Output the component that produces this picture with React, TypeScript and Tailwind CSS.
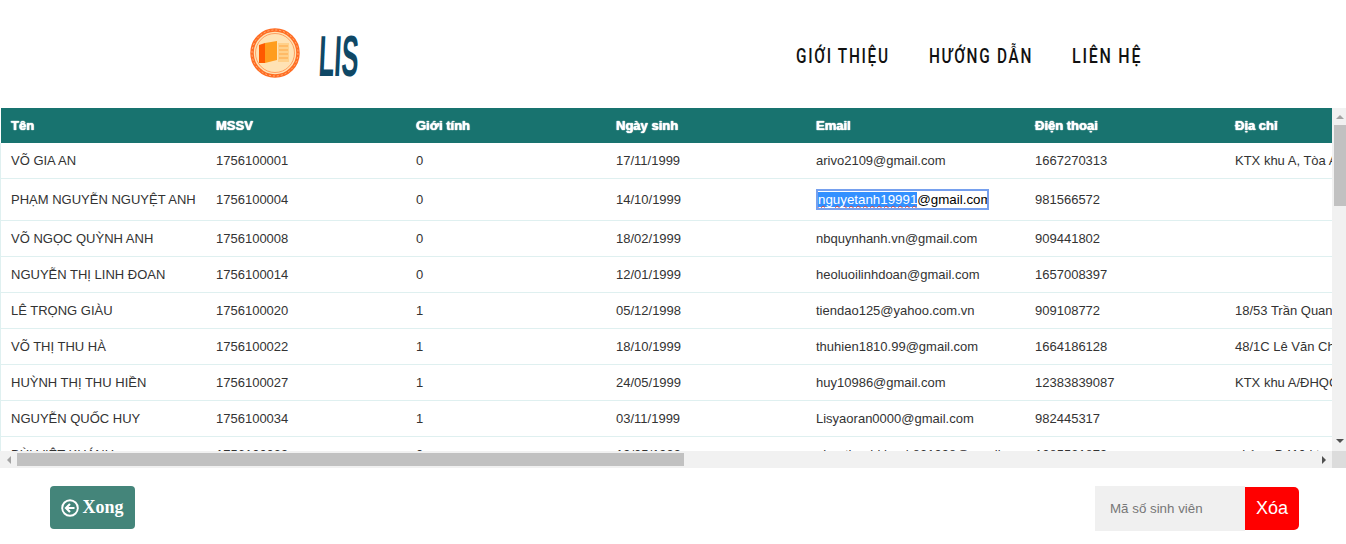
const students = [
  ["VÕ GIA AN", "1756100001", "0", "17/11/1999", "arivo2109@gmail.com", "1667270313", "KTX khu A, Tòa A"],
  ["PHẠM NGUYỄN NGUYỆT ANH", "1756100004", "0", "14/10/1999", "", "981566572", ""],
  ["VÕ NGỌC QUỲNH ANH", "1756100008", "0", "18/02/1999", "nbquynhanh.vn@gmail.com", "909441802", ""],
  ["NGUYỄN THỊ LINH ĐOAN", "1756100014", "0", "12/01/1999", "heoluoilinhdoan@gmail.com", "1657008397", ""],
  ["LÊ TRỌNG GIÀU", "1756100020", "1", "05/12/1998", "tiendao125@yahoo.com.vn", "909108772", "18/53 Trần Quang Khải"],
  ["VÕ THỊ THU HÀ", "1756100022", "1", "18/10/1999", "thuhien1810.99@gmail.com", "1664186128", "48/1C Lê Văn Chí"],
  ["HUỲNH THỊ THU HIỀN", "1756100027", "1", "24/05/1999", "huy10986@gmail.com", "12383839087", "KTX khu A/ĐHQG"],
  ["NGUYỄN QUỐC HUY", "1756100034", "1", "03/11/1999", "Lisyaoran0000@gmail.com", "982445317", ""],
  ["BÙI VIỆT KHÁNH", "1756100039", "0", "19/05/1999", "nhanthanhkhanh831998@gmail.com", "1285531879", "phòng D410 ktx"],
];

const headers = ["Tên", "MSSV", "Giới tính", "Ngày sinh", "Email", "Điện thoại", "Địa chỉ"];

function Logo() {
  return (
    <svg width="110" height="56" viewBox="0 0 110 56" className="shrink-0">
      <circle cx="25" cy="28" r="23" fill="#ffe2b4" stroke="#ff6d24" strokeWidth="3.5" />
      <circle cx="25" cy="28" r="23" fill="none" stroke="#ffb27a" strokeWidth="1" strokeDasharray="2 2" />
      <circle cx="25" cy="28" r="19.5" fill="none" stroke="#ff8d4a" strokeWidth="0.8" />
      <path d="M9 20 L15 18 L15 38 L9 38 Z" fill="#ff5a00" />
      <path d="M15 18 L27 16 L27 35 L15 38 Z" fill="#ff9d1e" />
      <rect x="28" y="18" width="11" height="19" fill="#ffd08a" />
      <path d="M29 21 H38 M29 25 H38 M29 29 H38 M29 33 H38" stroke="#ffb45c" strokeWidth="1.5" />
      <text
        transform="translate(68 51) scale(0.44 1) skewX(-6)"
        fontFamily="'Liberation Sans', sans-serif"
        fontWeight="700"
        fontSize="58"
        fill="#0f4866"
      >
        LIS
      </text>
    </svg>
  );
}

function EmailInput() {
  return (
    <div className="w-[173px] h-[21px] border-2 border-[#76a0ee] bg-white overflow-hidden whitespace-nowrap text-[13.33px] leading-[17px] text-black">
      <span className="bg-[#3390ff] text-white underline decoration-wavy decoration-[#e0413a] decoration-1">
        nguyetanh19991
      </span>
      @gmail.com
    </div>
  );
}

function Arrow({ d, color }: { d: string; color: string }) {
  return (
    <svg width="8" height="8" viewBox="0 0 8 8" className="shrink-0">
      <path d={d} fill={color} />
    </svg>
  );
}

export default function App() {
  return (
    <div className="w-[1346px] h-[544px] overflow-hidden bg-white font-['Liberation_Sans',Arial,sans-serif]">
      {/* Thanh trên cùng */}
      <div className="h-[108px] flex items-center pl-[250px] pb-[2px]">
        <Logo />
        <nav className="flex ml-[436px] pt-[6px] font-['Roboto',sans-serif] font-medium text-[20px] tracking-[2.2px] text-[#111]">
          <a className="w-[133px] whitespace-nowrap origin-left scale-x-[0.77]">GIỚI THIỆU</a>
          <a className="w-[143px] whitespace-nowrap origin-left scale-x-[0.77]">HƯỚNG DẪN</a>
          <a className="whitespace-nowrap origin-left scale-x-[0.8]">LIÊN HỆ</a>
        </nav>
      </div>

      {/* Bảng sinh viên */}
      <div className="h-[360px] flex flex-col">
        <div className="h-[343px] flex">
          <div className="w-[1332px] overflow-hidden">
            <table className="table-fixed w-[1900px] border-separate border-spacing-0 text-[13px] text-[#333]">
              <colgroup>
                <col className="w-[206px]" />
                <col className="w-[200px]" />
                <col className="w-[200px]" />
                <col className="w-[200px]" />
                <col className="w-[219px]" />
                <col className="w-[200px]" />
                <col className="w-[675px]" />
              </colgroup>
              <thead>
                <tr className="h-[35px]">
                  {headers.map((h) => (
                    <th
                      key={h}
                      className="px-[10px] bg-[#18736f] first:border-l first:border-white text-left font-bold text-white [text-shadow:0_0_1px_#fff,0_0_1px_#fff]"
                    >
                      {h}
                    </th>
                  ))}
                </tr>
              </thead>
              <tbody>
                {students.map((s, i) => (
                  <tr key={s[1]} className={i === 1 ? "h-[42px]" : "h-[36px]"}>
                    {s.map((v, j) => (
                      <td
                        key={j}
                        className="px-[10px] whitespace-nowrap border-b border-[#dff0f0] first:border-l"
                      >
                        {i === 1 && j === 4 ? <EmailInput /> : v}
                      </td>
                    ))}
                  </tr>
                ))}
              </tbody>
            </table>
          </div>
          <div className="w-[14px] bg-[#f1f1f1] flex flex-col">
            <div className="h-[17px] flex items-center justify-center pl-[2px]">
              <Arrow d="M0 6 L4 2 L8 6 Z" color="#a3a3a3" />
            </div>
            <div className="h-[81px] ml-[2px] bg-[#c1c1c1]" />
            <div className="flex-1" />
            <div className="h-[17px] flex items-center justify-center pl-[2px] pb-[4px]">
              <Arrow d="M0 2 L8 2 L4 6 Z" color="#505050" />
            </div>
          </div>
        </div>
        <div className="h-[17px] flex">
          <div className="w-[1332px] bg-[#f1f1f1] flex items-center">
            <div className="w-[17px] flex justify-center">
              <Arrow d="M6 0 L6 8 L2 4 Z" color="#a3a3a3" />
            </div>
            <div className="w-[667px] h-[13px] bg-[#c1c1c1]" />
            <div className="flex-1" />
            <div className="w-[17px] flex justify-center">
              <Arrow d="M2 0 L6 4 L2 8 Z" color="#505050" />
            </div>
          </div>
          <div className="w-[14px] bg-[#dcdcdc]" />
        </div>
      </div>

      {/* Nút phía dưới */}
      <div className="flex justify-between items-start pt-[18px] pl-[50px] pr-[47px]">
        <button className="w-[85px] h-[43px] rounded-[4px] bg-[#44857a] text-white flex items-center justify-center gap-[3px] font-['Liberation_Serif',serif] font-bold text-[18px]">
          <svg width="18" height="18" viewBox="0 0 18 18" fill="none" stroke="white" className="shrink-0">
            <circle cx="9" cy="9" r="7.8" strokeWidth="1.9" />
            <path d="M9 5 L5 9 L9 13 M5 9 H13.5" strokeWidth="2.2" />
          </svg>
          Xong
        </button>
        <div className="flex items-center">
          <div className="w-[150px] h-[45px] bg-[#f0f0f0] pl-[15px] flex items-center text-[13.33px] text-[#777]">
            Mã số sinh viên
          </div>
          <button className="w-[54px] h-[43px] bg-[#ff0000] text-white text-[18px] rounded-r-[5px]">Xóa</button>
        </div>
      </div>
    </div>
  );
}
